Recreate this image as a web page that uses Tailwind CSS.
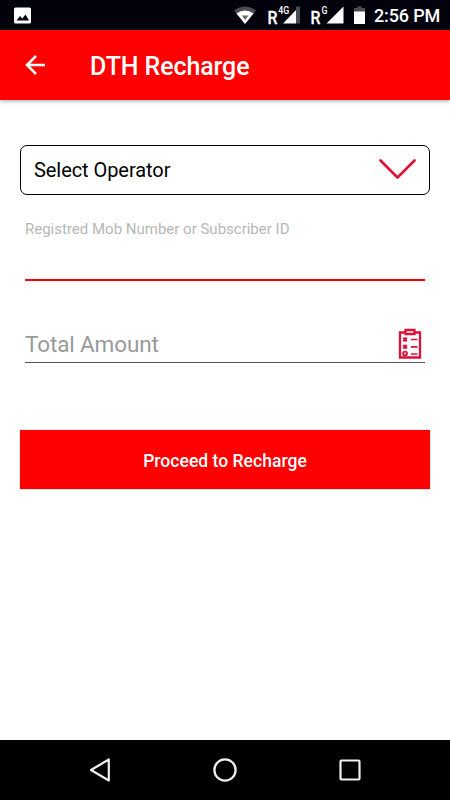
<!DOCTYPE html>
<html lang="en">
<head>
<meta charset="utf-8">
<title>DTH Recharge</title>
<script src="https://cdn.jsdelivr.net/npm/@tailwindcss/browser@4"></script>
</head>
<body class="bg-white font-['Roboto',sans-serif]">
<div class="flex h-[800px] w-[450px] flex-col overflow-hidden">
  <div class="flex h-[30px] shrink-0 items-center justify-between bg-[#01020c]">
    <svg class="ml-[14px] h-[17px] w-[17px]" viewBox="0 0 17 17"><rect y="0.5" width="17" height="16" rx="1.5" fill="#fff"/><path d="M2.5 13.5 6 9l2.300 2.500L11.500 7.500l3.500 6z" fill="#01020c"/></svg>
    <div class="flex h-full">
      <svg class="h-[30px] w-[140px]" viewBox="230 0 140 30" font-family="Roboto, sans-serif" font-weight="500" fill="#fff">
        <path d="M234 10.500Q245 2.500 256 10.500L245 24z" fill="#4b4c53"/>
        <path d="M236.500 13.500Q245 7.500 253.500 13.500L245 24z"/>
        <path d="M242 15.500h6.500L245.200 20z" fill="#66676c"/>
        <text x="267.500" y="23.500" font-size="19" stroke="#fff" stroke-width="0.300" textLength="10" lengthAdjust="spacingAndGlyphs">R</text>
        <text x="278.300" y="14" font-size="11.500" textLength="11" lengthAdjust="spacingAndGlyphs">4G</text>
        <path d="M283 23.500 296 10v13.500z"/>
        <path d="M296 6.500h4v17h-4z" fill="#4b4c53"/>
        <text x="310.500" y="23.500" font-size="19" stroke="#fff" stroke-width="0.300" textLength="10" lengthAdjust="spacingAndGlyphs">R</text>
        <text x="321.500" y="14" font-size="11.500" textLength="6" lengthAdjust="spacingAndGlyphs">G</text>
        <path d="M326.500 23.500 343.500 6.500v17z"/>
        <path d="M354 8h3.500V6.300h4V8h3.500v4h-11z" fill="#4b4c53"/><path d="M354 11.500h11V24h-11z"/>
      </svg>
      <span class="mr-[11px] ml-[4.500px] w-[65px] text-[18px] leading-[32px] font-medium tracking-[-0.15px] whitespace-nowrap text-white">2:56 PM</span>
    </div>
  </div>
  <header class="z-10 flex h-[70px] shrink-0 items-center bg-[#ff0000] shadow-[0_1px_4px_rgba(0,40,40,0.4)]">
    <svg class="ml-[25px] h-5 w-5" viewBox="0 0 20 20" fill="none" stroke="#fff" stroke-width="2.500"><path d="M20 10H2M11 1 2 10l9 9"/></svg>
    <h1 class="ml-[45px] pt-0.5 text-[25px] leading-none font-medium tracking-[-0.1px] text-white">DTH Recharge</h1>
  </header>
  <main class="flex flex-1 flex-col px-5">
    <div class="mt-[45px] flex h-[50px] shrink-0 items-center justify-between rounded-[7px] border border-black pr-[13px] pl-[13px]">
      <span class="-mt-px text-[20px] leading-6 tracking-[-0.06px] text-black">Select Operator</span>
      <svg class="h-[20px] w-[37px] -translate-y-px" viewBox="0 0 37 20" fill="none" stroke="#dc1038" stroke-width="2.600" stroke-linecap="round" stroke-linejoin="round"><path d="m1.500 1.500 17 17L35.500 1.500"/></svg>
    </div>
    <div class="mx-[5px] mt-[24px] flex h-[62px] shrink-0 flex-col border-b-2 border-[#ff0000]">
      <label class="text-[15px] leading-[20px] text-[#b7b7b7]">Registred Mob Number or Subscriber ID</label>
    </div>
    <div class="mx-[5px] mt-[46px] flex h-[36px] shrink-0 justify-between border-b border-[#555]">
      <span class="text-[22.500px] leading-[34px] tracking-[-0.13px] text-[#999]">Total Amount</span>
      <svg class="mt-px mr-[3px] h-[32px] w-[24px]" viewBox="0 0 24 32" fill="none" stroke="#dc1038" stroke-width="2.300"><path d="M7 4.500H2v25h20v-25h-5"/><path d="M7.500 2h9v4h-9z"/><path d="M13 11.500h6.500M13 18.800h6.500M13 26h6.500" stroke-width="1.700"/><path d="m5.300 9.700 3.500 3.500m0-3.500-3.500 3.500M5.300 17l3.500 3.500m0-3.500-3.500 3.500" stroke-width="2.200"/><circle cx="7" cy="25.500" r="1.900" stroke-width="1.900"/></svg>
    </div>
    <button class="mt-[67px] h-[59px] shrink-0 bg-[#ff0000] pt-[3px] text-[17.500px] font-medium tracking-[0.03px] text-white shadow-[0_0_1px_rgba(0,0,0,0.5)]">Proceed to Recharge</button>
  </main>
  <nav class="flex h-[60px] shrink-0 items-center justify-between bg-black px-[88px]">
    <svg class="h-6 w-6" viewBox="0 0 24 24" fill="none" stroke="#eee" stroke-width="2.200" stroke-linejoin="round"><path d="M20.800 1.500v21L3 12z"/></svg>
    <svg class="h-6 w-6" viewBox="0 0 24 24" fill="none" stroke="#eee" stroke-width="2.300"><circle cx="12" cy="12" r="10.600"/></svg>
    <svg class="h-6 w-6" viewBox="0 0 24 24" fill="none" stroke="#eee" stroke-width="2.200"><rect x="2.500" y="2.500" width="19" height="19" rx="1"/></svg>
  </nav>
</div>
</body>
</html>
